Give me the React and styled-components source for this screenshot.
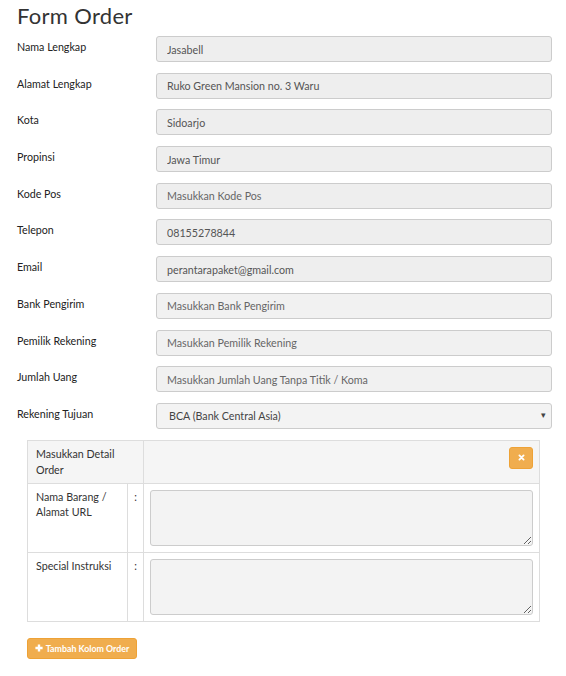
import React from "react";
import styled, { createGlobalStyle } from "styled-components";

const Global = createGlobalStyle`
  body {
    margin: 0;
    background: #fff;
    font-family: Lato, "Liberation Sans", Arial, sans-serif;
  }
  * { box-sizing: border-box; }
`;

const Page = styled.div`
  width: 566px;
  padding: 3px 14px 20px 17px;
`;

const Title = styled.h1`
  margin: 0 0 7px;
  font-size: 22px;
  line-height: 26px;
  font-weight: 400;
  letter-spacing: 0.3px;
  color: #333;
`;

const FormRow = styled.div`
  display: grid;
  grid-template-columns: 139px 1fr;
  margin-bottom: 10.7px;
`;

const Label = styled.label`
  font-size: 10.7px;
  line-height: 16px;
  padding-top: 3px;
  color: #222;
`;

const Input = styled.input`
  width: 100%;
  height: 26px;
  border: 1px solid #ccc;
  border-radius: 3px;
  background: ${(p) => (p.$light ? "#f1f1f1" : "#eeeeee")};
  padding: 0 10px;
  font-family: inherit;
  font-size: 10.7px;
  color: #555;
  outline: none;
  &::placeholder { color: #666; opacity: 1; }
`;

const SelectWrap = styled.div`
  position: relative;
  &::after {
    content: "▾";
    position: absolute;
    right: 6px;
    top: 6px;
    font-size: 9px;
    color: #444;
    pointer-events: none;
  }
`;

const Select = styled.select`
  width: 100%;
  height: 26px;
  appearance: none;
  -webkit-appearance: none;
  border: 1px solid #ccc;
  border-radius: 3px;
  background: #f3f3f3;
  padding: 0 12px;
  font-family: inherit;
  font-size: 10.7px;
  color: #444;
  outline: none;
`;

const DetailTable = styled.table`
  margin: 11px 0 0 10px;
  width: 513px;
  border-collapse: collapse;
  border: 1px solid #ddd;
  font-size: 10.7px;
  color: #333;
`;

const HeadCell = styled.td`
  background: #f5f5f5;
  border: 1px solid #ddd;
  height: 43px;
  padding: ${(p) => (p.$action ? "6px 6px 0 0" : "0 8px")};
  line-height: 16px;
  vertical-align: ${(p) => (p.$action ? "top" : "middle")};
  text-align: ${(p) => (p.$action ? "right" : "left")};
`;

const Cell = styled.td`
  border: 1px solid #ddd;
  vertical-align: top;
  line-height: 15px;
  padding: ${(p) => (p.$field ? "6px" : p.$colon ? "5px 0" : "5px 8px")};
  text-align: ${(p) => (p.$colon ? "center" : "left")};
  width: ${(p) => p.$w || "auto"};
`;

const TextArea = styled.textarea`
  display: block;
  width: 100%;
  height: 56px;
  border: 1px solid #ccc;
  border-radius: 3px;
  background: #f3f3f3;
  resize: vertical;
  outline: none;
  font-family: inherit;
`;

const WarnButton = styled.button`
  display: inline-flex;
  align-items: center;
  justify-content: center;
  gap: 3px;
  height: ${(p) => (p.$small ? "22px" : "21px")};
  width: ${(p) => (p.$small ? "24px" : "auto")};
  padding: ${(p) => (p.$small ? "0" : "0 6px")};
  background: #f0ad4e;
  border: 1px solid #eea236;
  border-radius: 3px;
  color: #fff;
  font-family: inherit;
  font-weight: 700;
  font-size: 8.8px;
  cursor: pointer;
`;

const AddButton = styled(WarnButton)`
  margin: 16px 0 0 10px;
  width: 110px;
`;

const XIcon = () => (
  <svg width="7" height="7" viewBox="0 0 10 10">
    <path d="M2 2 L8 8 M8 2 L2 8" stroke="#fff" strokeWidth="2.6" strokeLinecap="round" />
  </svg>
);

const PlusIcon = () => (
  <svg width="8" height="8" viewBox="0 0 10 10">
    <path d="M5 0.5 V9.5 M0.5 5 H9.5" stroke="#fff" strokeWidth="3" />
  </svg>
);

const fields = [
  { label: "Nama Lengkap", value: "Jasabell" },
  { label: "Alamat Lengkap", value: "Ruko Green Mansion no. 3 Waru" },
  { label: "Kota", value: "Sidoarjo" },
  { label: "Propinsi", value: "Jawa Timur" },
  { label: "Kode Pos", placeholder: "Masukkan Kode Pos" },
  { label: "Telepon", value: "08155278844" },
  { label: "Email", value: "perantarapaket@gmail.com" },
  { label: "Bank Pengirim", placeholder: "Masukkan Bank Pengirim", light: true },
  { label: "Pemilik Rekening", placeholder: "Masukkan Pemilik Rekening", light: true },
  { label: "Jumlah Uang", placeholder: "Masukkan Jumlah Uang Tanpa Titik / Koma", light: true },
];

export default function App() {
  return (
    <Page>
      <Global />
      <Title>Form Order</Title>
      {fields.map((f) => (
        <FormRow key={f.label}>
          <Label>{f.label}</Label>
          <Input
            $light={f.light}
            defaultValue={f.value}
            placeholder={f.placeholder}
            readOnly={!!f.value}
          />
        </FormRow>
      ))}
      <FormRow>
        <Label>Rekening Tujuan</Label>
        <SelectWrap>
          <Select defaultValue="bca">
            <option value="bca">BCA (Bank Central Asia)</option>
          </Select>
        </SelectWrap>
      </FormRow>

      <DetailTable>
        <tbody>
          <tr>
            <HeadCell colSpan={2}>Masukkan Detail Order</HeadCell>
            <HeadCell $action>
              <WarnButton $small>
                <XIcon />
              </WarnButton>
            </HeadCell>
          </tr>
          <tr>
            <Cell $w="100px">Nama Barang / Alamat URL</Cell>
            <Cell $colon $w="16px">:</Cell>
            <Cell $field>
              <TextArea />
            </Cell>
          </tr>
          <tr>
            <Cell $w="100px">Special Instruksi</Cell>
            <Cell $colon $w="16px">:</Cell>
            <Cell $field>
              <TextArea />
            </Cell>
          </tr>
        </tbody>
      </DetailTable>

      <AddButton>
        <PlusIcon />
        Tambah Kolom Order
      </AddButton>
    </Page>
  );
}
